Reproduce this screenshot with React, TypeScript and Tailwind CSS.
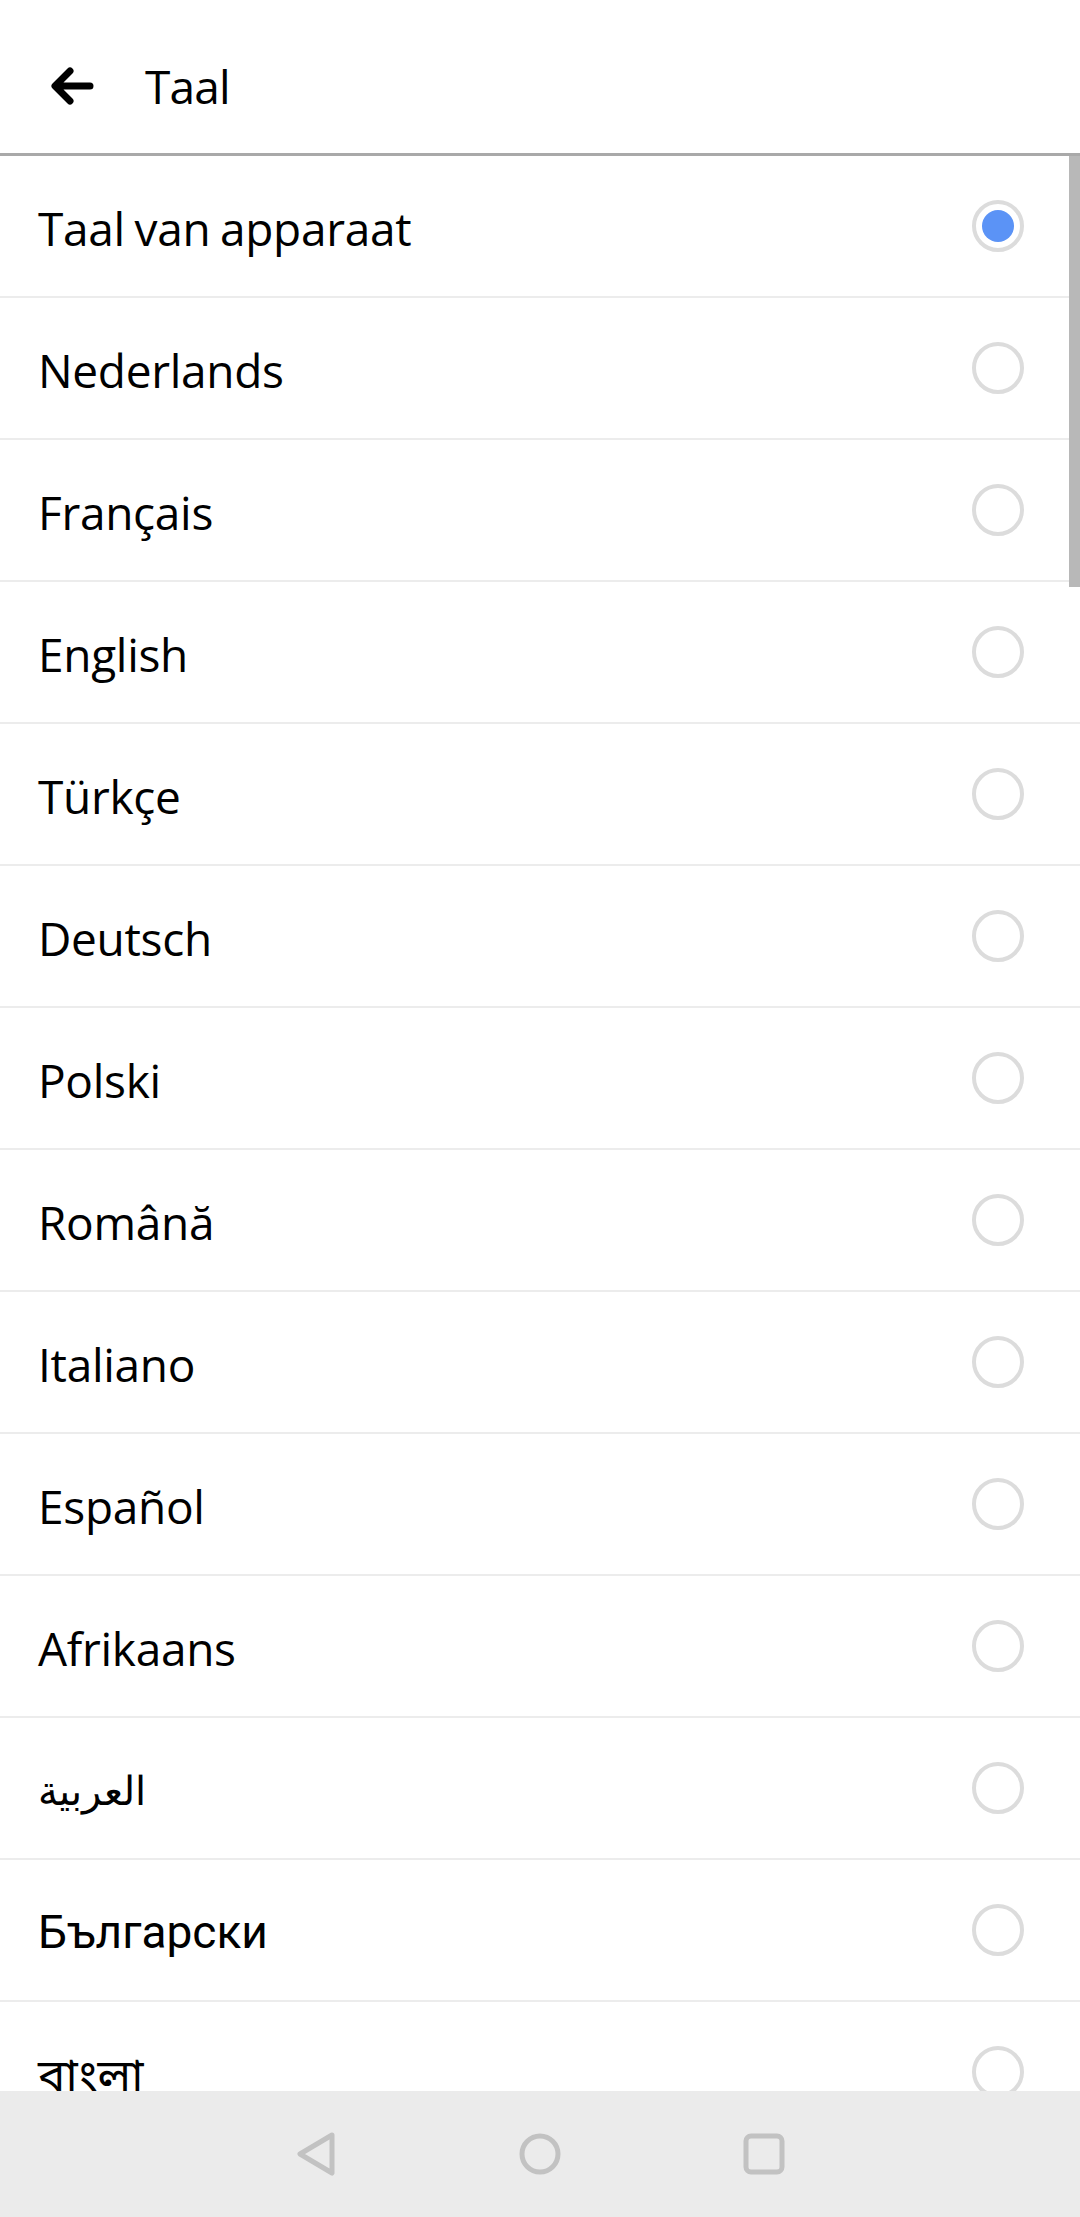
import React from "react";

const languages = [
  "Taal van apparaat",
  "Nederlands",
  "Français",
  "English",
  "Türkçe",
  "Deutsch",
  "Polski",
  "Română",
  "Italiano",
  "Español",
  "Afrikaans",
  "العربية",
  "Български",
  "বাংলা",
];

function Radio({ checked }: { checked: boolean }) {
  return (
    <div className="w-[52px] h-[52px] rounded-full border-[4px] border-[#dcdcdc] flex items-center justify-center">
      {checked && <div className="w-[32px] h-[32px] rounded-full bg-[#5b93f6]" />}
    </div>
  );
}

function labelClass(lang: string) {
  if (lang === "العربية") return "text-[40px] leading-none pt-[4px]";
  if (lang === "Български") return "text-[46px] leading-none pt-[4px] font-['Roboto']";
  return "text-[46px] leading-none pt-[4px] tracking-[-0.3px] [word-spacing:-2px]";
}

export default function App() {
  return (
    <div
      className="relative w-[1080px] h-[2217px] bg-white overflow-hidden flex flex-col text-black"
      style={{ fontFamily: '"Open Sans", "Noto Sans", "Noto Sans Bengali", sans-serif' }}
    >
      <header className="h-[156px] shrink-0 flex items-center pt-[18px] border-b-[3px] border-[#a9a9a9]">
        <button className="ml-[46px] w-[52px] h-[52px] flex items-center justify-center" aria-label="Terug">
          <svg width="48" height="40" viewBox="0 0 48 40" fill="none">
            <path
              d="M42 20H8M22 5L7 20l15 15"
              stroke="#000"
              strokeWidth="7"
              strokeLinecap="round"
              strokeLinejoin="round"
            />
          </svg>
        </button>
        <h1 className="ml-[47px] text-[46px] leading-none tracking-[-0.8px]">Taal</h1>
      </header>

      <div className="flex-1 overflow-hidden">
        {languages.map((lang, i) => (
          <div
            key={lang}
            className="h-[142px] flex items-center justify-between pl-[38px] pr-[56px] border-b-2 border-[#ececec]"
          >
            <span className={labelClass(lang)}>{lang}</span>
            <Radio checked={i === 0} />
          </div>
        ))}
      </div>

      <div className="absolute right-0 top-[156px] w-[11px] h-[431px] bg-[#b8b8b8]" />

      <nav className="absolute left-0 bottom-0 w-full h-[126px] bg-[#ebebeb] flex items-center justify-center gap-[180px]">
        <svg width="44" height="46" viewBox="0 0 44 46" fill="none">
          <path
            d="M38 4L6 23l32 19z"
            stroke="#c2c2c2"
            strokeWidth="5"
            strokeLinejoin="round"
          />
        </svg>
        <svg width="44" height="44" viewBox="0 0 44 44" fill="none">
          <circle cx="22" cy="22" r="18" stroke="#c2c2c2" strokeWidth="5" />
        </svg>
        <svg width="44" height="44" viewBox="0 0 44 44" fill="none">
          <rect x="4" y="4" width="36" height="36" rx="5" stroke="#c2c2c2" strokeWidth="5" />
        </svg>
      </nav>
    </div>
  );
}
